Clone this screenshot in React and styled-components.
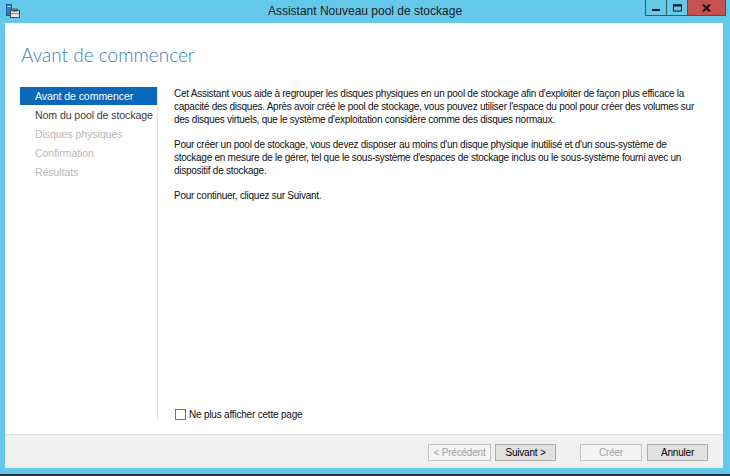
import styled, { createGlobalStyle } from "styled-components";

const GlobalStyle = createGlobalStyle`
  html, body {
    margin: 0;
    padding: 0;
    background: #63c8ea;
  }
`;

const sans = `"Liberation Sans", Arial, sans-serif`;

// Fenêtre complète
const Window = styled.div`
  width: 730px;
  height: 476px;
  box-sizing: border-box;
  background: #63c8ea;
  border-bottom: 2px solid #23343e;
  display: flex;
  flex-direction: column;
  font-family: ${sans};
  overflow: hidden;
`;

// Barre de titre
const TitleBar = styled.div`
  height: 23px;
  flex: none;
  display: grid;
  grid-template-columns: 1fr auto 1fr;
  align-items: start;
`;

const AppIcon = styled.svg`
  margin: 4px 0 0 6px;
  width: 14px;
  height: 14px;
`;

const TitleText = styled.div`
  font-size: 12px;
  line-height: 22px;
  color: #1b1b1b;
`;

const Controls = styled.div`
  justify-self: end;
  display: flex;
  margin-right: 4px;
`;

const ControlButton = styled.div`
  width: ${(p) => p.w}px;
  height: 16px;
  box-sizing: border-box;
  border: 1px solid #2d5a6a;
  border-top: none;
  border-left: ${(p) => (p.first ? "1px solid #2d5a6a" : "none")};
  background: ${(p) => (p.close ? "#c75050" : "transparent")};
  display: flex;
  align-items: center;
  justify-content: center;
`;

// Cadre intérieur
const Frame = styled.div`
  flex: 1;
  margin: 0 7px 6px 5px;
  display: flex;
  flex-direction: column;
  background: #fff;
`;

const Content = styled.div`
  flex: 1;
  display: flex;
  flex-direction: column;
  padding: 0 0 14px 0;
`;

const Heading = styled.h1`
  margin: 20px 0 0 16px;
  font-family: "Lato", "Open Sans", sans-serif;
  font-weight: 300;
  font-size: 19px;
  line-height: 24px;
  color: #3a80ba;
`;

const Body = styled.div`
  flex: 1;
  display: flex;
  margin-top: 20px;
`;

const Nav = styled.ul`
  list-style: none;
  margin: 0 0 0 15px;
  padding: 0;
  width: 137px;
  flex: none;
`;

const NavItem = styled.li`
  height: 18px;
  margin-bottom: 1px;
  padding-left: 15px;
  font-size: 10.6px;
  letter-spacing: -0.1px;
  line-height: 18px;
  white-space: nowrap;
  background: ${(p) => (p.active ? "#0968ba" : "transparent")};
  color: ${(p) => (p.active ? "#fff" : p.disabled ? "#b9b9b9" : "#3a3a3a")};
`;

const Main = styled.div`
  flex: 1;
  border-left: 1px solid #e2e2e2;
  padding-left: 16px;
  display: flex;
  flex-direction: column;
`;

const Paragraph = styled.p`
  margin: 0 0 12px 0;
  font-size: 10px;
  letter-spacing: -0.26px;
  line-height: 13px;
  color: #111;
`;

const Line = styled.span`
  display: block;
  white-space: nowrap;
`;

const CheckRow = styled.label`
  margin-top: auto;
  display: flex;
  align-items: center;
  gap: 3px;
  font-size: 10px;
  letter-spacing: -0.2px;
  color: #111;
`;

const Box = styled.span`
  width: 11px;
  height: 11px;
  box-sizing: border-box;
  border: 1px solid #707070;
  background: #fff;
  margin-left: 1px;
`;

// Pied de page avec les boutons
const Footer = styled.div`
  height: 34px;
  box-sizing: border-box;
  flex: none;
  border-top: 1px solid #dedede;
  background: #f0f0f0;
  display: flex;
  justify-content: flex-end;
  align-items: flex-start;
  padding: 9px 15px 0 0;
  gap: 24px;
`;

const Group = styled.div`
  display: flex;
  gap: ${(p) => p.gap}px;
`;

const Button = styled.button`
  width: ${(p) => p.w || 61}px;
  height: 17px;
  padding: 0;
  font-family: ${sans};
  font-size: 10px;
  letter-spacing: -0.2px;
  border: 1px solid ${(p) => (p.disabled ? "#c2c2c2" : "#acacac")};
  background: ${(p) => (p.disabled ? "#f4f4f4" : "#e1e1e1")};
  color: ${(p) => (p.disabled ? "#a2a2a2" : "#000")};
`;

const steps = [
  { label: "Avant de commencer", active: true },
  { label: "Nom du pool de stockage" },
  { label: "Disques physiques", disabled: true },
  { label: "Confirmation", disabled: true },
  { label: "Résultats", disabled: true },
];

const App = () => (
  <>
    <GlobalStyle />
    <Window>
      <TitleBar>
        <AppIcon viewBox="0 0 14 14">
          <rect x="0.5" y="0.5" width="5" height="11" fill="#2a7fd0" stroke="#1a5aa0" />
          <rect x="1.5" y="2" width="3" height="1" fill="#bfe3ff" />
          <rect x="4.5" y="6.5" width="9" height="7" fill="#e6e6e6" stroke="#4a4a4a" />
          <rect x="7" y="5" width="4" height="2" fill="none" stroke="#4a4a4a" />
          <rect x="5" y="9" width="8" height="1" fill="#8a8a8a" />
        </AppIcon>
        <TitleText>Assistant Nouveau pool de stockage</TitleText>
        <Controls>
          <ControlButton w={22} first>
            <svg width="8" height="8" viewBox="0 0 8 8">
              <rect x="0" y="5" width="8" height="2" fill="#111" />
            </svg>
          </ControlButton>
          <ControlButton w={21}>
            <svg width="9" height="8" viewBox="0 0 9 8">
              <rect x="0.5" y="1" width="8" height="6" fill="none" stroke="#111" />
              <rect x="0" y="0.5" width="9" height="2" fill="#111" />
            </svg>
          </ControlButton>
          <ControlButton w={38} close>
            <svg width="9" height="8" viewBox="0 0 9 8">
              <path d="M1 0.5 L8 7.5 M8 0.5 L1 7.5" stroke="#111" strokeWidth="2" />
            </svg>
          </ControlButton>
        </Controls>
      </TitleBar>

      <Frame>
        <Content>
          <Heading>Avant de commencer</Heading>
          <Body>
            <Nav>
              {steps.map((s) => (
                <NavItem key={s.label} active={s.active} disabled={s.disabled}>
                  {s.label}
                </NavItem>
              ))}
            </Nav>
            <Main>
              <Paragraph>
                <Line>
                  Cet Assistant vous aide à regrouper les disques physiques en un pool de stockage afin d'exploiter de façon plus efficace la
                </Line>
                <Line>
                  capacité des disques. Après avoir créé le pool de stockage, vous pouvez utiliser l'espace du pool pour créer des volumes sur
                </Line>
                <Line>des disques virtuels, que le système d'exploitation considère comme des disques normaux.</Line>
              </Paragraph>
              <Paragraph>
                <Line>
                  Pour créer un pool de stockage, vous devez disposer au moins d'un disque physique inutilisé et d'un sous-système de
                </Line>
                <Line>
                  stockage en mesure de le gérer, tel que le sous-système d'espaces de stockage inclus ou le sous-système fourni avec un
                </Line>
                <Line>dispositif de stockage.</Line>
              </Paragraph>
              <Paragraph>
                <Line>Pour continuer, cliquez sur Suivant.</Line>
              </Paragraph>
              <CheckRow>
                <Box />
                Ne plus afficher cette page
              </CheckRow>
            </Main>
          </Body>
        </Content>
        <Footer>
          <Group gap={4}>
            <Button w={63} disabled>
              &lt; Précédent
            </Button>
            <Button w={61}>Suivant &gt;</Button>
          </Group>
          <Group gap={5}>
            <Button w={62} disabled>
              Créer
            </Button>
            <Button w={61}>Annuler</Button>
          </Group>
        </Footer>
      </Frame>
    </Window>
  </>
);

export default App;
